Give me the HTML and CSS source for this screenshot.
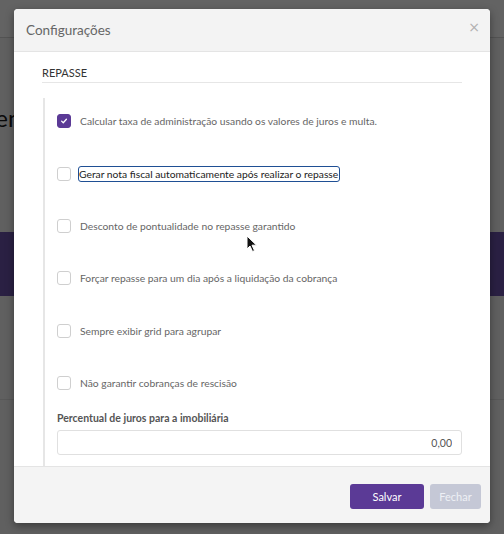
FILE: index.html
```html
<!DOCTYPE html>
<html lang="pt-BR">
<head>
  <meta charset="UTF-8" />
  <meta name="viewport" content="width=device-width, initial-scale=1.0" />
  <title>Configurações</title>
  <link rel="stylesheet" href="styles.css">
</head>
<body>
  <!-- page behind the dialog -->
  <div class="page">
    <div class="topbar"></div>
    <div class="page-title">Gerenciar</div>
    <div class="page-spacer"></div>
    <div class="banner"></div>
    <div class="page-rest"></div>
    <div class="page-foot"></div>
  </div>

  <div class="backdrop"></div>

  <div class="modal">
    <div class="modal-header">
      <h4 class="modal-title">Configurações</h4>
      <button class="close" type="button">&times;</button>
    </div>

    <div class="modal-body">
      <div class="section-title">REPASSE</div>

      <div class="section">
        <label class="check-row">
          <span class="checkbox checked">
            <svg viewBox="0 0 10 10" width="8" height="8"><path d="M2 5.2 L4.1 7.2 L8 2.8" fill="none" stroke="#fff" stroke-width="1.6" stroke-linecap="round" stroke-linejoin="round"/></svg>
          </span>
          <span class="check-label">Calcular taxa de administração usando os valores de juros e multa.</span>
        </label>
        <label class="check-row">
          <span class="checkbox"></span>
          <span class="check-label focused">Gerar nota fiscal automaticamente após realizar o repasse</span>
        </label>
        <label class="check-row">
          <span class="checkbox"></span>
          <span class="check-label">Desconto de pontualidade no repasse garantido</span>
        </label>
        <label class="check-row">
          <span class="checkbox"></span>
          <span class="check-label">Forçar repasse para um dia após a liquidação da cobrança</span>
        </label>
        <label class="check-row">
          <span class="checkbox"></span>
          <span class="check-label">Sempre exibir grid para agrupar</span>
        </label>
        <label class="check-row">
          <span class="checkbox"></span>
          <span class="check-label">Não garantir cobranças de rescisão</span>
        </label>

        <div class="field">
          <label class="field-label">Percentual de juros para a imobiliária</label>
          <input class="field-input" type="text" value="0,00">
        </div>
      </div>
    </div>

    <div class="modal-footer">
      <button class="btn btn-primary" type="button">Salvar</button>
      <button class="btn btn-disabled" type="button">Fechar</button>
    </div>
  </div>

  <!-- mouse pointer -->
  <svg class="cursor" width="12" height="18" viewBox="0 0 12 18">
    <path d="M1 1 L1 14 L4 11 L6.5 16.5 L8.5 15.6 L6 10.2 L10.5 10.2 Z" fill="#111" stroke="#fff" stroke-width="1"/>
  </svg>
</body>
</html>
```

FILE: styles.css
```css
/* Reset & Base */
* {
  margin: 0;
  padding: 0;
  box-sizing: border-box;
}

body {
  font-family: Lato, 'Open Sans', sans-serif;
  background-color: #f0f0f0;
  width: 504px;
  height: 534px;
  overflow: hidden;
  position: relative;
}

/* Page behind the dialog */
.page {
  display: flex;
  flex-direction: column;
  height: 100%;
}

.topbar {
  height: 38px;
  background-color: #f7f7f7;
  border-bottom: 1px solid #d0d0d0;
}

.page-title {
  margin-top: 66px;
  margin-left: -43px;
  font-size: 24px;
  color: #1a1a1a;
  line-height: 28px;
  white-space: nowrap;
}

.page-spacer {
  height: 100px;
}

.banner {
  height: 64px;
  background-color: #6a52a8;
}

.page-rest {
  height: 104px;
  border-bottom: 1px solid #ddd;
}

.page-foot {
  flex: 1;
}

.backdrop {
  position: absolute;
  inset: 0;
  background-color: rgba(0, 0, 0, 0.6);
}

/* Dialog */
.modal {
  position: absolute;
  left: 14px;
  top: 9px;
  width: 476px;
  height: 514px;
  background-color: #fff;
  border-radius: 4px;
  box-shadow: 0 3px 9px rgba(0, 0, 0, 0.4);
  display: flex;
  flex-direction: column;
  overflow: hidden;
}

.modal-header {
  height: 43px;
  background-color: #f3f3f3;
  border-bottom: 1px solid #e4e4e4;
  display: flex;
  align-items: center;
  justify-content: space-between;
  padding: 0 10px 0 12px;
}

.modal-title {
  font-size: 13.5px;
  font-weight: 400;
  color: #666;
}

.close {
  background: none;
  border: none;
  font-family: 'DejaVu Sans', sans-serif;
  font-size: 14px;
  color: #b0b0b0;
  line-height: 1;
  margin-top: -6px;
}

.modal-body {
  flex: 1;
  padding: 14px 28px 0 28px;
  display: flex;
  flex-direction: column;
}

.section-title {
  font-size: 11px;
  color: #333;
  padding-bottom: 3px;
  border-bottom: 1px solid #e6e6e6;
}

.section {
  flex: 1;
  margin-top: 15px;
  margin-left: 1px;
  border-left: 2px solid #e6e6e6;
  padding: 0 0 0 12px;
}

/* Checkbox rows */
.check-row {
  display: flex;
  align-items: center;
  height: 52.4px;
}

.check-row:first-child {
  margin-top: -3px;
}

.checkbox {
  width: 14px;
  height: 14px;
  border: 1px solid #cfcfcf;
  border-radius: 3px;
  background-color: #fff;
  margin-right: 9px;
  display: flex;
  align-items: center;
  justify-content: center;
  flex-shrink: 0;
}

.checkbox.checked {
  background-color: #5b3a96;
  border-color: #5b3a96;
}

.check-label {
  font-size: 10.3px;
  color: #666;
  line-height: 14px;
}

.check-label.focused {
  color: #222;
  outline: 1.5px solid #1f4f94;
  border-radius: 2px;
  padding: 0 1px 0 0;
  margin-left: -1px;
}

/* Numeric field */
.field {
  margin-top: 3px;
}

.field-label {
  display: block;
  font-size: 10.5px;
  line-height: 13px;
  font-weight: 700;
  color: #555;
  margin-bottom: 5px;
}

.field-input {
  width: 405px;
  height: 25px;
  border: 1px solid #e0e0e0;
  border-radius: 3px;
  padding: 0 9px;
  font-family: Lato, sans-serif;
  font-size: 10.5px;
  color: #555;
  text-align: right;
}

/* Footer */
.modal-footer {
  height: 57px;
  background-color: #f4f4f4;
  border-top: 1px solid #e4e4e4;
  display: flex;
  justify-content: flex-end;
  align-items: flex-start;
  gap: 6px;
  padding: 17px 9px 0 0;
}

.btn {
  height: 25px;
  border: none;
  border-radius: 3px;
  font-family: Lato, sans-serif;
  font-size: 11px;
  color: #fff;
  cursor: pointer;
}

.btn-primary {
  width: 74px;
  background-color: #5b3a96;
}

.btn-disabled {
  width: 51px;
  background-color: #c5c8d6;
  color: #eef0f5;
}

.cursor {
  position: absolute;
  left: 246px;
  top: 235px;
}
```
